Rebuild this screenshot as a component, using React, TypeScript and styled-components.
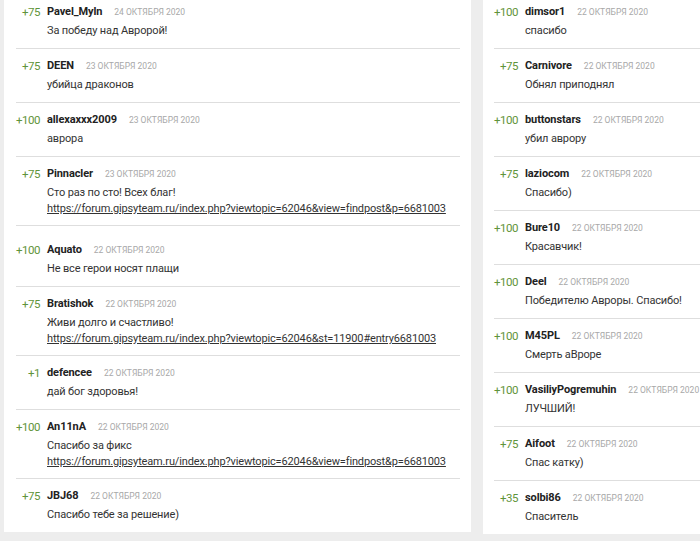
import React from "react";
import styled, { createGlobalStyle } from "styled-components";

interface CommentItem {
  score: string;
  name: string;
  date: string;
  text: string;
  link?: string;
  extraTop?: boolean;
}

const leftComments: CommentItem[] = [
  { score: "+75", name: "Pavel_Myln", date: "24 октября 2020", text: "За победу над Авророй!" },
  { score: "+75", name: "DEEN", date: "23 октября 2020", text: "убийца драконов" },
  { score: "+100", name: "allexaxxx2009", date: "23 октября 2020", text: "аврора" },
  {
    score: "+75",
    name: "Pinnacler",
    date: "23 октября 2020",
    text: "Сто раз по сто! Всех благ!",
    link: "https://forum.gipsyteam.ru/index.php?viewtopic=62046&view=findpost&p=6681003",
  },
  { score: "+100", name: "Aquato", date: "22 октября 2020", text: "Не все герои носят плащи", extraTop: true },
  {
    score: "+75",
    name: "Bratishok",
    date: "22 октября 2020",
    text: "Живи долго и счастливо!",
    link: "https://forum.gipsyteam.ru/index.php?viewtopic=62046&st=11900#entry6681003",
  },
  { score: "+1", name: "defencee", date: "22 октября 2020", text: "дай бог здоровья!" },
  {
    score: "+100",
    name: "An11nA",
    date: "22 октября 2020",
    text: "Спасибо за фикс",
    link: "https://forum.gipsyteam.ru/index.php?viewtopic=62046&view=findpost&p=6681003",
  },
  { score: "+75", name: "JBJ68", date: "22 октября 2020", text: "Спасибо тебе за решение)" },
];

const rightComments: CommentItem[] = [
  { score: "+100", name: "dimsor1", date: "22 октября 2020", text: "спасибо" },
  { score: "+75", name: "Carnivore", date: "22 октября 2020", text: "Обнял приподнял" },
  { score: "+100", name: "buttonstars", date: "22 октября 2020", text: "убил аврору" },
  { score: "+75", name: "laziocom", date: "22 октября 2020", text: "Спасибо)" },
  { score: "+100", name: "Bure10", date: "22 октября 2020", text: "Красавчик!" },
  { score: "+100", name: "Deel", date: "22 октября 2020", text: "Победителю Авроры. Спасибо!" },
  { score: "+100", name: "M45PL", date: "22 октября 2020", text: "Смерть аВроре" },
  { score: "+100", name: "VasiliyPogremuhin", date: "22 октября 2020", text: "ЛУЧШИЙ!" },
  { score: "+75", name: "Aifoot", date: "22 октября 2020", text: "Спас катку)" },
  { score: "+35", name: "solbi86", date: "22 октября 2020", text: "Спаситель" },
];

export default function App() {
  return (
    <>
      <GlobalStyle />
      <Page>
        <Panel>
          {leftComments.map((item, i) => (
            <Comment key={i} item={item} />
          ))}
        </Panel>
        <Panel $narrow>
          {rightComments.map((item, i) => (
            <Comment key={i} item={item} />
          ))}
        </Panel>
      </Page>
    </>
  );
}

function Comment({ item }: { item: CommentItem }) {
  return (
    <Row $extraTop={item.extraTop}>
      <Score>{item.score}</Score>
      <Content>
        <Header>
          <Name>{item.name}</Name>
          <DateLabel>{item.date}</DateLabel>
        </Header>
        <Body>
          <div>{item.text}</div>
          {item.link && <Link href="#">{item.link}</Link>}
        </Body>
      </Content>
    </Row>
  );
}

const GlobalStyle = createGlobalStyle`
  html, body {
    margin: 0;
    padding: 0;
    background: #ededed;
    overflow: hidden;
  }
  body {
    font-family: Roboto, "Noto Sans", sans-serif;
  }
`;

const Page = styled.div`
  display: grid;
  grid-template-columns: 467px 240px;
  column-gap: 12px;
  padding-left: 4px;
  margin-top: -5px;
  align-items: start;
`;

const Panel = styled.div<{ $narrow?: boolean }>`
  background: #fff;
  padding: 0 11px 0 ${(p) => (p.$narrow ? "11px" : "12px")};
  > div:last-child {
    border-bottom: 0;
  }
`;

const Row = styled.div<{ $extraTop?: boolean }>`
  display: flex;
  align-items: flex-start;
  gap: 7px;
  padding: ${(p) => (p.$extraTop ? "16px" : "9px")} 0 9px;
  border-bottom: 1px solid #dedede;
`;

const Score = styled.div`
  width: 24px;
  flex: none;
  text-align: right;
  font-size: 11.5px;
  letter-spacing: -0.5px;
  line-height: 16px;
  height: 16px;
  color: #5f943a;
  white-space: nowrap;
`;

const Content = styled.div`
  display: flex;
  flex-direction: column;
  gap: 3px;
  min-width: 0;
`;

const Header = styled.div`
  display: flex;
  align-items: baseline;
  gap: 12px;
  height: 16px;
  line-height: 16px;
  white-space: nowrap;
`;

const Name = styled.span`
  font-size: 11px;
  font-weight: 700;
  letter-spacing: -0.1px;
  color: #222;
`;

const DateLabel = styled.span`
  font-size: 8.5px;
  text-transform: uppercase;
  color: #a8a8a8;
`;

const Body = styled.div`
  font-size: 11px;
  letter-spacing: -0.15px;
  line-height: 16px;
  color: #333;
  white-space: nowrap;
`;

const Link = styled.a`
  display: block;
  line-height: 15px;
  color: #333;
  text-decoration: underline;
`;
